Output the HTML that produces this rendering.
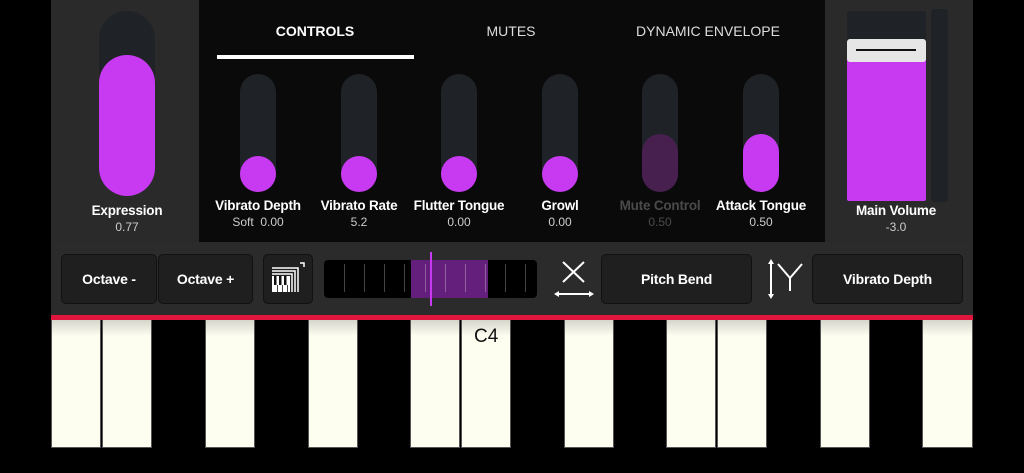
<!DOCTYPE html>
<html><head><style>
*{margin:0;padding:0;box-sizing:border-box}
body{width:1024px;height:473px;background:#000;position:relative;overflow:hidden;font-family:"Liberation Sans",Roboto,sans-serif;color:#fff}
.a{position:absolute}
.lbl{position:absolute;text-align:center;font-weight:bold;font-size:13.5px;width:120px;letter-spacing:-0.2px}
.val{position:absolute;text-align:center;font-size:12px;color:#ccc;width:120px}
.trk{position:absolute;background:#1f2226;border-radius:18px;width:36px;top:74px;height:118px}
.knob{position:absolute;width:36px;height:36px;border-radius:18px;background:#c83af2;top:156px}
.btn{position:absolute;background:#1f1f1f;border:1px solid #111;border-radius:5px;font-weight:bold;font-size:14px;display:flex;align-items:center;justify-content:center;top:254px;height:50px;letter-spacing:-0.2px}
.tab{position:absolute;top:23px;font-size:14px;text-align:center;width:200px}
.wk{position:absolute;top:320px;height:128px;width:50px;background:linear-gradient(#d6d6cc,#fdfdf0 16px,#fdfdf0);border:1px solid #555;border-top:none}
.tk{position:absolute;top:264px;height:28px;width:1px;background:#444}
</style></head><body>
<div class="a" style="left:51px;top:0;width:148px;height:242px;background:#2a2a2a"></div>
<div class="a" style="left:199px;top:0;width:626px;height:242px;background:#0a0a0a"></div>
<div class="a" style="left:825px;top:0;width:148px;height:242px;background:#2a2a2a"></div>
<div class="a" style="left:99px;top:11px;width:56px;height:185px;border-radius:28px;background:#1f2226"></div>
<div class="a" style="left:99px;top:55px;width:56px;height:141px;border-radius:28px;background:#c83af2"></div>
<div class="lbl" style="left:67px;top:203px">Expression</div>
<div class="val" style="left:67px;top:220px">0.77</div>
<div class="tab" style="left:215px;font-weight:bold">CONTROLS</div>
<div class="tab" style="left:411px;color:#ddd">MUTES</div>
<div class="tab" style="left:608px;color:#ddd">DYNAMIC ENVELOPE</div>
<div class="a" style="left:217px;top:55px;width:197px;height:4px;background:#fff"></div>
<div class="trk" style="left:240px"></div><div class="knob" style="left:240px"></div>
<div class="trk" style="left:341px"></div><div class="knob" style="left:341px"></div>
<div class="trk" style="left:441px"></div><div class="knob" style="left:441px"></div>
<div class="trk" style="left:542px"></div><div class="knob" style="left:542px"></div>
<div class="trk" style="left:642px"></div><div class="a" style="left:642px;top:134px;width:36px;height:58px;border-radius:18px;background:#47204f"></div>
<div class="trk" style="left:743px"></div><div class="a" style="left:743px;top:134px;width:36px;height:58px;border-radius:18px;background:#c83af2"></div>
<div class="lbl" style="left:198px;top:198px">Vibrato Depth</div><div class="val" style="left:198px;top:215px">Soft&nbsp; 0.00</div>
<div class="lbl" style="left:299px;top:198px">Vibrato Rate</div><div class="val" style="left:299px;top:215px">5.2</div>
<div class="lbl" style="left:399px;top:198px">Flutter Tongue</div><div class="val" style="left:399px;top:215px">0.00</div>
<div class="lbl" style="left:500px;top:198px">Growl</div><div class="val" style="left:500px;top:215px">0.00</div>
<div class="lbl" style="left:600px;top:198px;color:#4a4a4a">Mute Control</div><div class="val" style="left:600px;top:215px;color:#4a4a4a">0.50</div>
<div class="lbl" style="left:701px;top:198px">Attack Tongue</div><div class="val" style="left:701px;top:215px">0.50</div>
<div class="a" style="left:847px;top:11px;width:79px;height:190px;background:#1f2226;border-radius:2px"></div>
<div class="a" style="left:847px;top:55px;width:79px;height:146px;background:#c83af2;border-radius:2px"></div>
<div class="a" style="left:847px;top:39px;width:79px;height:23px;background:#e6e6e6;border-radius:3px"></div>
<div class="a" style="left:856px;top:49px;width:60px;height:2px;background:#111"></div>
<div class="a" style="left:931px;top:9px;width:17px;height:193px;background:#1f2226;border-radius:3px"></div>
<div class="lbl" style="left:836px;top:203px">Main Volume</div>
<div class="val" style="left:836px;top:220px">-3.0</div>
<div class="a" style="left:51px;top:242px;width:922px;height:73px;background:#2b2b2b"></div>
<div class="a" style="left:51px;top:315px;width:922px;height:5px;background:#e0163f"></div>
<div class="btn" style="left:61px;width:96px">Octave -</div>
<div class="btn" style="left:158px;width:95px">Octave +</div>
<div class="btn" style="left:263px;width:50px">
<svg width="40" height="40" viewBox="0 0 40 40"><g fill="none" stroke="#fff" stroke-width="1.5"><path d="M4 9h26v24M4 12h23v21M4 15h20v18"/><path d="M32 4h4v4" /></g><rect x="4" y="17" width="18" height="16" fill="#fff"/><g fill="#111"><rect x="6" y="17" width="2.5" height="9"/><rect x="11" y="17" width="2.5" height="9"/><rect x="16" y="17" width="2.5" height="9"/><rect x="9" y="26" width="0.8" height="7"/><rect x="14" y="26" width="0.8" height="7"/><rect x="19" y="26" width="0.8" height="7"/></g></svg></div>
<div class="a" style="left:324px;top:260px;width:213px;height:38px;background:#000;border-radius:4px"></div>
<div class="a" style="left:411px;top:260px;width:77px;height:38px;background:#631f7b"></div>
<div class="tk" style="left:344px"></div><div class="tk" style="left:364px"></div><div class="tk" style="left:384px"></div><div class="tk" style="left:404px"></div><div class="tk" style="left:425px;background:#9060a0"></div><div class="tk" style="left:445px;background:#9060a0"></div><div class="tk" style="left:465px;background:#9060a0"></div><div class="tk" style="left:485px;background:#9060a0"></div><div class="tk" style="left:505px"></div><div class="tk" style="left:525px"></div>
<div class="a" style="left:430px;top:252px;width:2px;height:54px;background:#c83af2"></div>
<svg class="a" style="left:553px;top:258px" width="42" height="42" viewBox="0 0 42 42"><g stroke="#fff" stroke-width="2" fill="none"><path d="M10 4L31 24M31 4L10 24"/><path d="M3 36H39"/></g><path d="M1 36l5-3v6zM41 36l-5-3v6z" fill="#fff"/></svg>
<div class="btn" style="left:601px;width:151px">Pitch Bend</div>
<svg class="a" style="left:762px;top:258px" width="42" height="42" viewBox="0 0 42 42"><g stroke="#fff" stroke-width="2" fill="none"><path d="M9 5V37"/><path d="M16 6L28 20L40 6M28 20V33"/></g><path d="M9 1l-3 5h6zM9 41l-3-5h6z" fill="#fff"/></svg>
<div class="btn" style="left:812px;width:151px">Vibrato Depth</div>
<div class="wk" style="left:51px"></div>
<div class="wk" style="left:102px"></div>
<div class="wk" style="left:205px"></div>
<div class="wk" style="left:308px"></div>
<div class="wk" style="left:410px"></div>
<div class="wk" style="left:461px"></div>
<div class="wk" style="left:564px"></div>
<div class="wk" style="left:666px"></div>
<div class="wk" style="left:717px"></div>
<div class="wk" style="left:820px"></div>
<div class="wk" style="left:922px;width:51px"></div>
<div class="a" style="left:474px;top:326px;font-size:19px;color:#111">C4</div>
</body></html>
